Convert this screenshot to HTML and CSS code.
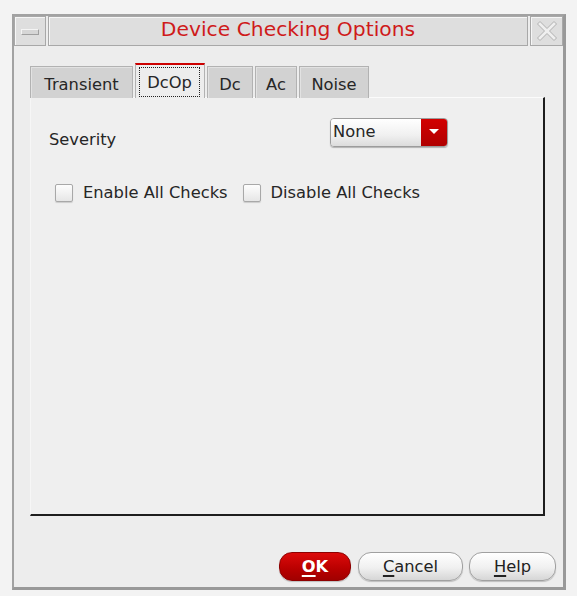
FILE: index.html
```html
<!DOCTYPE html>
<html>
<head>
<meta charset="utf-8">
<link rel="stylesheet" href="styles.css">
</head>
<body>
<div class="window">
  <div class="titlebar">
    <div class="tbtn tmin"><span class="minus"></span></div>
    <div class="title">Device Checking Options</div>
    <div class="tbtn tclose">
      <svg width="24" height="24" viewBox="0 0 24 24">
        <path d="M2.5 5 L5 2.5 L12 9.5 L19 2.5 L21.5 5 L14.5 12 L21.5 19 L19 21.5 L12 14.5 L5 21.5 L2.5 19 L9.5 12 Z" fill="#efefef" stroke="#b0b0b0" stroke-width="1"/>
      </svg>
    </div>
  </div>
  <div class="body">
    <div class="tabs">
      <div class="tab t-transient">Transient</div>
      <div class="tab active t-dcop"><span class="focus">DcOp</span></div>
      <div class="tab t-dc">Dc</div>
      <div class="tab t-ac">Ac</div>
      <div class="tab t-noise">Noise</div>
    </div>
    <div class="panel">
      <div class="sev-row">
        <div class="sev-label">Severity</div>
        <div class="combo">
          <div class="combo-text">None</div>
          <div class="combo-arrow"><span class="tri"></span></div>
        </div>
      </div>
      <div class="checks">
        <label class="check"><span class="box"></span><span>Enable All Checks</span></label>
        <label class="check"><span class="box"></span><span>Disable All Checks</span></label>
      </div>
    </div>
    <div class="buttons">
      <div class="btn ok"><u>O</u>K</div>
      <div class="btn cancel"><u>C</u>ancel</div>
      <div class="btn help"><u>H</u>elp</div>
    </div>
  </div>
</div>
</body>
</html>
```

FILE: styles.css
```css
* { box-sizing: border-box; }
html, body { margin: 0; padding: 0; }
body {
  background: #f3f3f3;
  font-family: "DejaVu Sans", "Liberation Sans", sans-serif;
  font-size: 16.3px;
  color: #262626;
  padding: 14px 0 0 12px;
  width: 577px;
  height: 596px;
  overflow: hidden;
}
.window {
  width: 554px;
  height: 576px;
  border-style: solid;
  border-color: #a2a2a2 #999 #999 #a2a2a2;
  border-width: 2px 3px 3px 2px;
  background: #ededed;
  display: flex;
  flex-direction: column;
}
.titlebar {
  height: 30px;
  display: flex;
  gap: 2px;
  flex: none;
}
.tbtn, .title {
  background: #dedede;
  border: 1px solid #a8a8a8;
  box-shadow: inset 1px 1px 0 #f6f6f6;
}
.tmin {
  width: 32px;
  display: flex;
  align-items: center;
  justify-content: center;
}
.minus {
  width: 18px;
  height: 6px;
  background: #d6d6d6;
  border: 1px solid #a0a0a0;
  border-top-color: #f4f4f4;
  border-left-color: #f4f4f4;
  margin-top: 2px;
}
.title {
  flex: 1;
  text-align: center;
  color: #cf1a1a;
  font-size: 20.3px;
  line-height: 25px;
}
.tclose {
  width: 33px;
  display: flex;
  align-items: center;
  justify-content: center;
}
.body {
  flex: 1;
  display: flex;
  flex-direction: column;
  padding: 18px 18px 0 16px;
}
.tabs {
  display: flex;
  align-items: flex-end;
  gap: 2px;
  height: 34px;
  position: relative;
  z-index: 1;
  margin-bottom: -1px;
}
.tab {
  height: 32px;
  background: #d2d2d2;
  border: 1px solid #b2b2b2;
  border-bottom: none;
  box-shadow: inset 1px 1px 0 #e2e2e2;
  line-height: 35px;
  text-align: center;
}
.t-transient { width: 103px; }
.t-dcop { width: 70px; }
.t-dc { width: 46px; }
.t-ac { width: 42px; }
.t-noise { width: 70px; }
.tab.active {
  height: 35px;
  background: #ededed;
  border-top: 2px solid #cc0000;
  box-shadow: none;
  padding: 2px 4px 0 3px;
}
.focus {
  display: block;
  border: 1px dotted #222;
  line-height: 30px;
  height: 30px;
}
.panel {
  height: 419px;
  border-top: 1px solid #fbfbfb;
  border-left: 1px solid #f6f6f6;
  border-right: 2px solid #1e1e1e;
  border-bottom: 2px solid #1e1e1e;
  background: #efefef;
  padding: 20px 0 0 18px;
}
.sev-row {
  display: flex;
  align-items: flex-start;
}
.sev-label {
  width: 281px;
  margin-top: 12px;
  line-height: 19px;
}
.combo {
  width: 118px;
  height: 29px;
  display: flex;
  border: 1px solid #9c9c9c;
  border-radius: 4px;
  overflow: hidden;
  box-shadow: 0 1px 1px rgba(0,0,0,0.25);
}
.combo-text {
  flex: 1;
  background: linear-gradient(#ffffff, #f0f0f0 60%, #dcdcdc);
  padding-left: 2px;
  line-height: 26px;
}
.combo-arrow {
  width: 26px;
  background: linear-gradient(#d20000, #b00000);
  display: flex;
  align-items: center;
  justify-content: center;
}
.tri {
  width: 0;
  height: 0;
  border-left: 5px solid transparent;
  border-right: 5px solid transparent;
  border-top: 5px solid #fff;
  margin-top: -2px;
}
.checks {
  display: flex;
  gap: 15px;
  margin-top: 35px;
  padding-left: 6px;
}
.check {
  display: flex;
  align-items: center;
  gap: 10px;
  line-height: 18px;
}
.box {
  width: 18px;
  height: 18px;
  border: 1px solid #a8a8a8;
  border-radius: 2px;
  background: linear-gradient(#fdfdfd, #e6e6e6);
  box-shadow: 0 1px 1px rgba(0,0,0,0.15);
}
.buttons {
  display: flex;
  justify-content: flex-end;
  margin-top: 36px;
  margin-right: -11px;
  gap: 6px;
}
.btn {
  height: 29px;
  border-radius: 13px;
  text-align: center;
  line-height: 27px;
  border: 1px solid #a0a0a0;
  background: linear-gradient(#ffffff, #f0f0f0 55%, #d6d6d6);
  box-shadow: 0 1px 1px rgba(0,0,0,0.2);
  color: #222;
}
.btn u { text-underline-offset: 3px; text-decoration-thickness: 2px; }
.ok {
  width: 72px;
  margin-right: 1px;
  background: linear-gradient(#dc0a0a, #b80000 60%, #a00000);
  border-color: #8e0000;
  color: #fff;
  font-weight: bold;
}
.cancel { width: 105px; }
.help { width: 87px; }
```
